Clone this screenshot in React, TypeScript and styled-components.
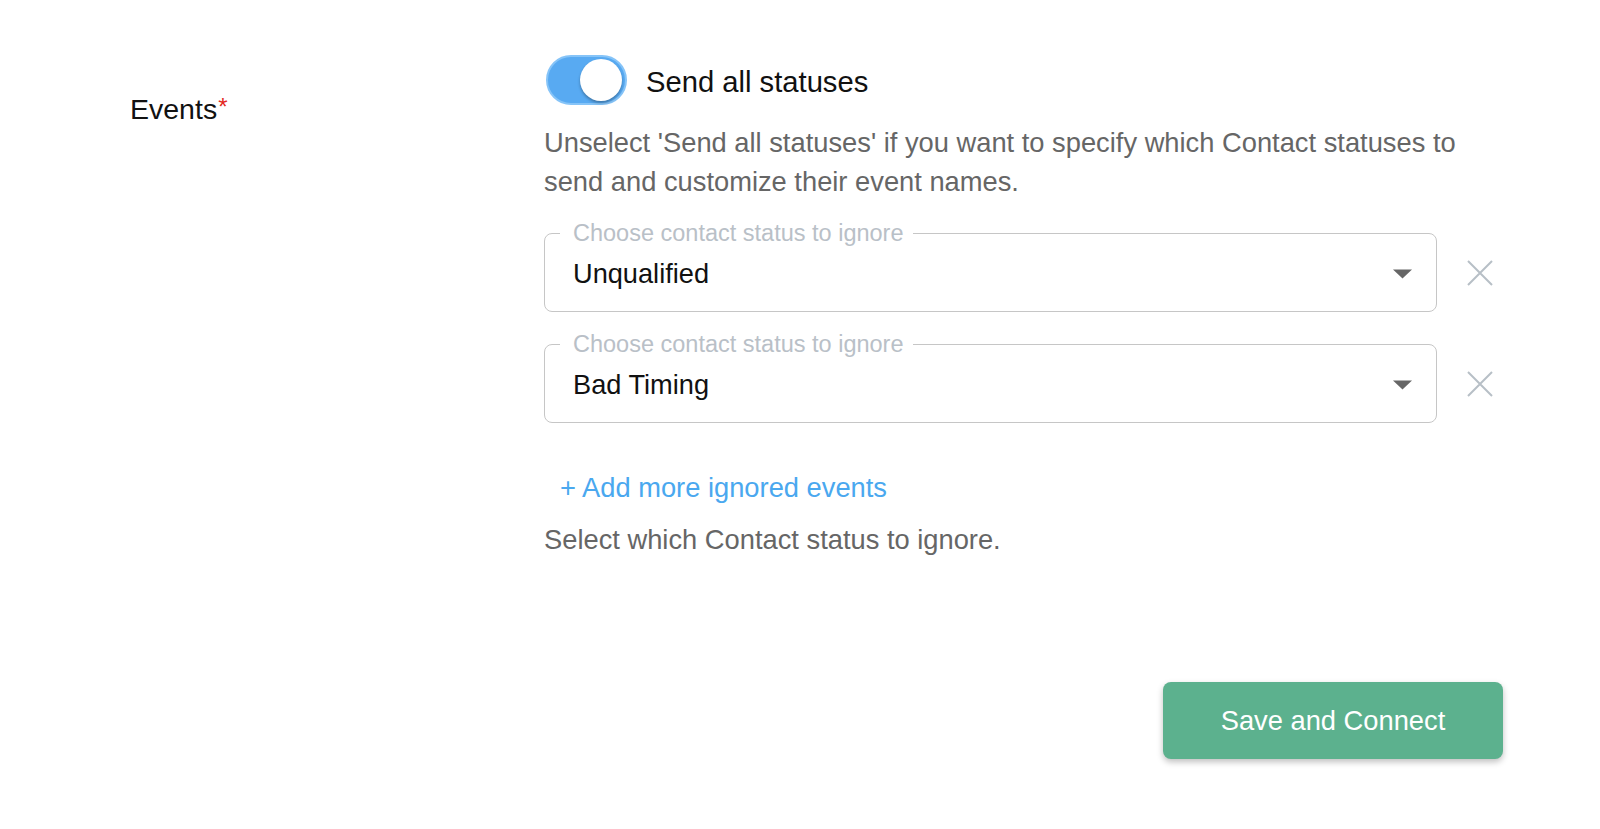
import React from "react";
import styled, { createGlobalStyle } from "styled-components";

const GlobalStyle = createGlobalStyle`
  html, body {
    margin: 0;
    padding: 0;
    background: #fff;
  }
  body {
    font-family: "Liberation Sans", Arial, Helvetica, sans-serif;
    color: #111;
    -webkit-font-smoothing: antialiased;
  }
  * {
    box-sizing: border-box;
  }
`;

const ignoredStatuses = ["Unqualified", "Bad Timing"];

function CaretDown() {
  return (
    <svg width="19" height="10" viewBox="0 0 19 10">
      <polygon points="0,0.5 19,0.5 9.5,9.5" fill="#666" />
    </svg>
  );
}

function CloseIcon() {
  return (
    <svg width="26" height="26" viewBox="0 0 26 26">
      <path d="M1 1 L25 25 M25 1 L1 25" stroke="#b7bfc6" strokeWidth="2" fill="none" />
    </svg>
  );
}

function App() {
  return (
    <>
      <GlobalStyle />
      <Page>
        <FieldLabel>
          Events<Required>*</Required>
        </FieldLabel>
        <FieldBody>
          <ToggleRow>
            <Switch type="button" aria-pressed="true">
              <Knob />
            </Switch>
            <ToggleText>Send all statuses</ToggleText>
          </ToggleRow>
          <Description>
            Unselect 'Send all statuses' if you want to specify which Contact
            statuses to send and customize their event names.
          </Description>
          <SelectList>
            {ignoredStatuses.map((status) => (
              <SelectRow key={status}>
                <SelectBox>
                  <FloatingLabel>Choose contact status to ignore</FloatingLabel>
                  <SelectValue>{status}</SelectValue>
                  <CaretDown />
                </SelectBox>
                <RemoveButton type="button" aria-label="Remove">
                  <CloseIcon />
                </RemoveButton>
              </SelectRow>
            ))}
          </SelectList>
          <AddLink type="button">+ Add more ignored events</AddLink>
          <Helper>Select which Contact status to ignore.</Helper>
          <Footer>
            <SaveButton type="button">Save and Connect</SaveButton>
          </Footer>
        </FieldBody>
      </Page>
    </>
  );
}

export default App;

const Page = styled.div`
  display: grid;
  grid-template-columns: 414px 1fr;
  padding: 55px 97px 40px 130px;
`;

const FieldLabel = styled.div`
  padding-top: 37px;
  font-size: 28.5px;
  line-height: 1.2;
  color: #111;
`;

const Required = styled.span`
  color: #e3281e;
  font-size: 24px;
  vertical-align: 4px;
  margin-left: 1px;
`;

const FieldBody = styled.div`
  display: flex;
  flex-direction: column;
`;

const ToggleRow = styled.div`
  display: flex;
  align-items: center;
  gap: 19px;
  height: 50px;
`;

const Switch = styled.button`
  display: flex;
  align-items: center;
  justify-content: flex-end;
  width: 81px;
  height: 50px;
  margin-left: 2px;
  padding: 0 3px;
  border: 2px solid #86c4f8;
  border-radius: 25px;
  background: #58aaf2;
  cursor: pointer;
`;

const Knob = styled.span`
  width: 42px;
  height: 42px;
  border-radius: 50%;
  background: #fff;
  box-shadow: 0 2px 3px rgba(0, 0, 0, 0.3);
`;

const ToggleText = styled.span`
  padding-top: 4px;
  font-size: 29.2px;
  color: #111;
`;

const Description = styled.p`
  margin: 18px 0 32px;
  font-size: 27.3px;
  line-height: 39px;
  color: #666;
`;

const SelectList = styled.div`
  display: flex;
  flex-direction: column;
  gap: 32px;
`;

const SelectRow = styled.div`
  display: flex;
  align-items: center;
  gap: 20px;
`;

const SelectBox = styled.div`
  position: relative;
  flex: 1;
  display: flex;
  align-items: center;
  justify-content: space-between;
  height: 79px;
  padding: 2px 24px 0 28px;
  border: 1px solid #c6c6c6;
  border-radius: 8px;
`;

const FloatingLabel = styled.span`
  position: absolute;
  top: -13px;
  left: 15px;
  padding: 0 9px 0 13px;
  background: #fff;
  font-size: 23.5px;
  line-height: 24px;
  color: #b9c0c7;
`;

const SelectValue = styled.span`
  font-size: 27.2px;
  color: #111;
`;

const RemoveButton = styled.button`
  display: flex;
  align-items: center;
  justify-content: center;
  width: 46px;
  height: 46px;
  padding: 0;
  border: 0;
  background: none;
  cursor: pointer;
`;

const AddLink = styled.button`
  align-self: flex-start;
  margin-top: 45px;
  padding: 0 0 0 16px;
  border: 0;
  background: none;
  font-family: inherit;
  font-size: 27.3px;
  line-height: 39px;
  color: #4aa8ef;
  cursor: pointer;
`;

const Helper = styled.div`
  margin-top: 13px;
  font-size: 27.3px;
  line-height: 39px;
  color: #666;
`;

const Footer = styled.div`
  display: flex;
  justify-content: flex-end;
  margin-top: 123px;
`;

const SaveButton = styled.button`
  width: 340px;
  height: 77px;
  padding-top: 2px;
  border: 0;
  border-radius: 8px;
  background: #5cb18e;
  box-shadow: 0 3px 6px rgba(0, 0, 0, 0.25);
  font-family: inherit;
  font-size: 27.3px;
  color: #fff;
  cursor: pointer;
`;
